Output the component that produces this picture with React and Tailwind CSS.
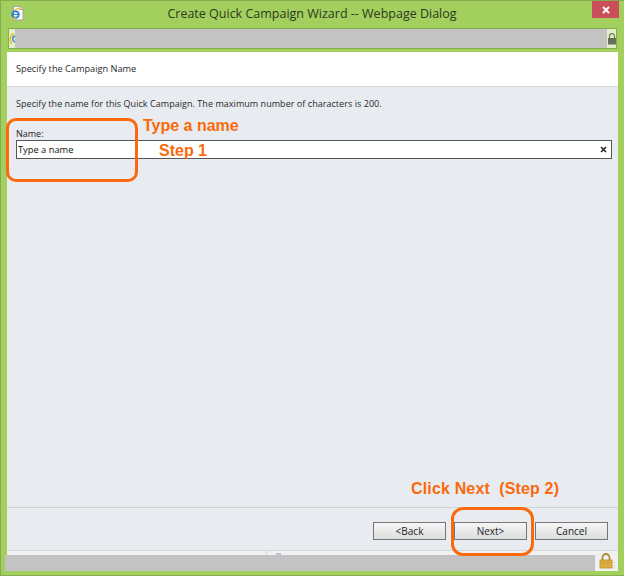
const FONT = "font-['Open_Sans','Noto_Sans',sans-serif]";

function PageIcon() {
  return (
    <svg width="14" height="15" viewBox="0 0 14 15">
      <path d="M3.500 0.500h6.500l3 3v10.500h-9.500z" fill="#fbfbf8" stroke="#a5a59a" />
      <path d="M10 0.500v3h3" fill="#e2e2da" stroke="#a5a59a" />
      <circle cx="5.500" cy="8.500" r="3.300" fill="none" stroke="#2f7fd6" strokeWidth="1.900" />
      <path d="M3 8.500h5" stroke="#2f7fd6" strokeWidth="1.100" />
      <path d="M0.800 13c1 .8 2.500 0 4.500-2M8.500 4.500c.8-1 1-1.500.5-2-.8-.4-2.300 0-4 1.500" fill="none" stroke="#f0c020" strokeWidth="1.100" />
    </svg>
  );
}

function SmallLock() {
  return (
    <svg width="8" height="12" viewBox="0 0 8 12">
      <path d="M1.500 5V3.200a2.500 2.500 0 0 1 5 0V5" fill="none" stroke="#6f7a5f" strokeWidth="1.200" />
      <rect x="0" y="5" width="8" height="6.500" fill="#667059" />
    </svg>
  );
}

function GoldLock() {
  return (
    <svg width="16" height="16" viewBox="0 0 16 16">
      <path d="M3.500 7V4.500a3.500 3.500 0 0 1 7 0V7" fill="none" stroke="#b08a2c" strokeWidth="1.800" />
      <rect x="1" y="7" width="12" height="8" fill="#e0b040" stroke="#b8902e" strokeWidth="0.800" />
      <path d="M1 10h12M5 7v8M9 7v8" stroke="#c59a34" strokeWidth="0.600" />
      <path d="M15 9v.8M15 12v.8M15 14.500v.8" stroke="#a9a9a0" />
    </svg>
  );
}

function WizardButton({ children }) {
  return (
    <button className="w-[73px] h-[18px] flex items-center justify-center border border-[#767676] bg-gradient-to-b from-[#f6f6f6] to-[#dddddd] text-[10px] text-[#222] leading-none">
      {children}
    </button>
  );
}

export default function App() {
  return (
    <div className={`relative w-[624px] h-[576px] overflow-hidden flex flex-col bg-[#a2cf5e] border-t border-l border-[#86ad4d] ${FONT}`}>
      <div className="h-[27px] flex items-start shrink-0">
        <div className="w-[9px]" />
        <div className="pt-[5px]"><PageIcon /></div>
        <div className="flex-1 pt-[3px] pl-[8px] text-center text-[12.500px] leading-[20px] text-[#2d3a20]">
          Create Quick Campaign Wizard -- Webpage Dialog
        </div>
        <div className="w-[27px] h-[17px] mr-[5px] bg-[#c9505a] flex items-center justify-center">
          <svg width="8" height="8" viewBox="0 0 8 8">
            <path d="M1 1l6 6M7 1l-6 6" stroke="#fff" strokeWidth="1.800" />
          </svg>
        </div>
      </div>

      <div className="ml-[7px] mr-[7px] h-[21px] shrink-0 flex border border-[#86ad4d] bg-[#e0efc8]">
        <div className="w-[6px] overflow-hidden flex items-center">
          <svg width="6" height="12" viewBox="0 0 6 12">
            <path d="M5 1C1 2 0 8 3 11" fill="none" stroke="#e5b820" strokeWidth="1.400" />
            <path d="M6 3C3 4 3 8 6 9" fill="none" stroke="#2f7fd6" strokeWidth="1.400" />
          </svg>
        </div>
        <div className="flex-1 bg-[#c3c3c3]" />
        <div className="w-[9px] flex items-center justify-center"><SmallLock /></div>
      </div>

      <div className="ml-[6px] mr-[6px] mt-[3px] flex-1 flex flex-col bg-[#e8ebf0] min-h-0">
        <div className="h-[35px] shrink-0 bg-white border-b border-[#d6d8dc] flex items-center pl-[9px] text-[9.200px] text-[#2a2a2a]">
          Specify the Campaign Name
        </div>
        <div className="flex-1 pl-[9px] pr-[6px] pt-[11px] text-[#2a2a2a] text-[9px]">
          <p className="leading-[12px] tracking-[0.005em]">
            Specify the name for this Quick Campaign. The maximum number of characters is 200.
          </p>
          <p className="mt-[18px] leading-[12px] text-[#222]">Name:</p>
          <div className="h-[19px] border border-[#555] bg-white flex items-center justify-between pl-[1px] pr-[4px] text-[#111] text-[9.300px]">
            <span>Type a name</span>
            <svg width="7" height="7" viewBox="0 0 7 7">
              <path d="M1 1l5 5M6 1l-5 5" stroke="#222" strokeWidth="1.500" />
            </svg>
          </div>
        </div>
        <div className="h-[43px] shrink-0 border-t border-[#cfd3d6] flex justify-end gap-[8px] pt-[14px] pr-[10px]">
          <WizardButton>&lt;Back</WizardButton>
          <WizardButton>Next&gt;</WizardButton>
          <WizardButton>Cancel</WizardButton>
        </div>
        <div className="h-[5px] shrink-0 bg-[#f1f1f1] border-t border-[#d4d6d8] flex">
          <div className="ml-[259px] w-px bg-[#d8d8d8]" />
          <div className="ml-[9px] mt-[2px] w-[5px] h-[2px] bg-[#b5c3d8]" />
        </div>
      </div>

      <div className="ml-[4px] mr-[6px] h-[16px] shrink-0 flex">
        <div className="flex-1 bg-[#c3c3c3]" />
        <div className="relative w-[23px] h-[20px] -mt-[4px] bg-[#f1f1f1] flex items-center justify-center">
          <GoldLock />
        </div>
      </div>
      <div className="h-[5px] shrink-0 border-b border-[#86ad4d]" />

      <div className="absolute left-[5px] top-[117px] w-[132px] h-[64px] rounded-[10px] border-[3px] border-[#f96a0c]" />
      <div className="absolute left-[450px] top-[506px] w-[83px] h-[49px] rounded-[12px] border-[3px] border-[#f96a0c]" />
      <div className="absolute left-[142px] top-[115px] text-[16px] leading-[20px] font-bold text-[#f96a0c] font-['Liberation_Sans',sans-serif]">Type a name</div>
      <div className="absolute left-[158px] top-[140px] text-[16px] leading-[20px] font-bold text-[#f96a0c] font-['Liberation_Sans',sans-serif]">Step 1</div>
      <div className="absolute left-[410px] top-[478px] text-[16px] leading-[20px] font-bold tracking-[0.010em] text-[#f96a0c] whitespace-pre font-['Liberation_Sans',sans-serif]">Click Next  (Step 2)</div>
    </div>
  );
}
